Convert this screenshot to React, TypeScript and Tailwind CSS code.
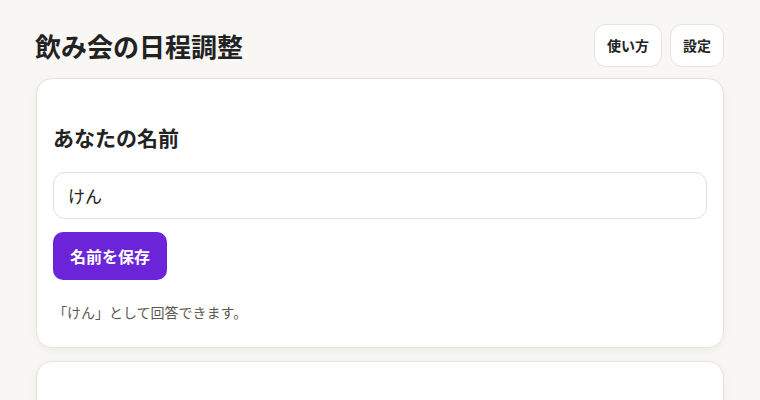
import * as React from 'react';

const font = { fontFamily: '"Noto Sans CJK JP", "Noto Sans", sans-serif' };

export default function App() {
  const [name, setName] = React.useState('けん');

  return (
    <div className="min-h-[400px] bg-[#f9f7f4] text-[#222] overflow-hidden" style={font}>
      <div className="mx-auto w-[688px] pt-6">
        <header className="flex items-center justify-between">
          <h1 className="text-[26px] font-bold leading-none -ml-px">飲み会の日程調整</h1>
          <div className="flex gap-2">
            <button className="h-[43px] px-3 rounded-xl border border-[#e7e3dd] bg-white text-[14px] font-bold">
              使い方
            </button>
            <button className="h-[43px] px-3 rounded-xl border border-[#e7e3dd] bg-white text-[14px] font-bold">
              設定
            </button>
          </div>
        </header>

        <section className="mt-[11px] rounded-2xl border border-[#e7e3dd] bg-white shadow-[0_2px_8px_rgba(0,0,0,0.05)] px-4 pt-[44px] pb-[25px]">
          <h2 className="text-[21px] font-bold leading-7">あなたの名前</h2>
          <input
            value={name}
            onChange={(e) => setName(e.target.value)}
            className="mt-[21px] block w-full h-[47px] rounded-xl border border-[#e2ded8] px-[14px] text-[17px] outline-none"
          />
          <button className="mt-[13px] h-[48px] px-[17px] rounded-[10px] bg-[#6b24d8] text-white text-[16px] font-bold">
            名前を保存
          </button>
          <p className="mt-[22px] text-[14px] leading-5 text-[#5c5955]">「{name}」として回答できます。</p>
        </section>

        <section className="mt-[13px] h-[120px] rounded-2xl border border-[#e7e3dd] bg-white shadow-[0_2px_8px_rgba(0,0,0,0.05)]" />
      </div>
    </div>
  );
}
